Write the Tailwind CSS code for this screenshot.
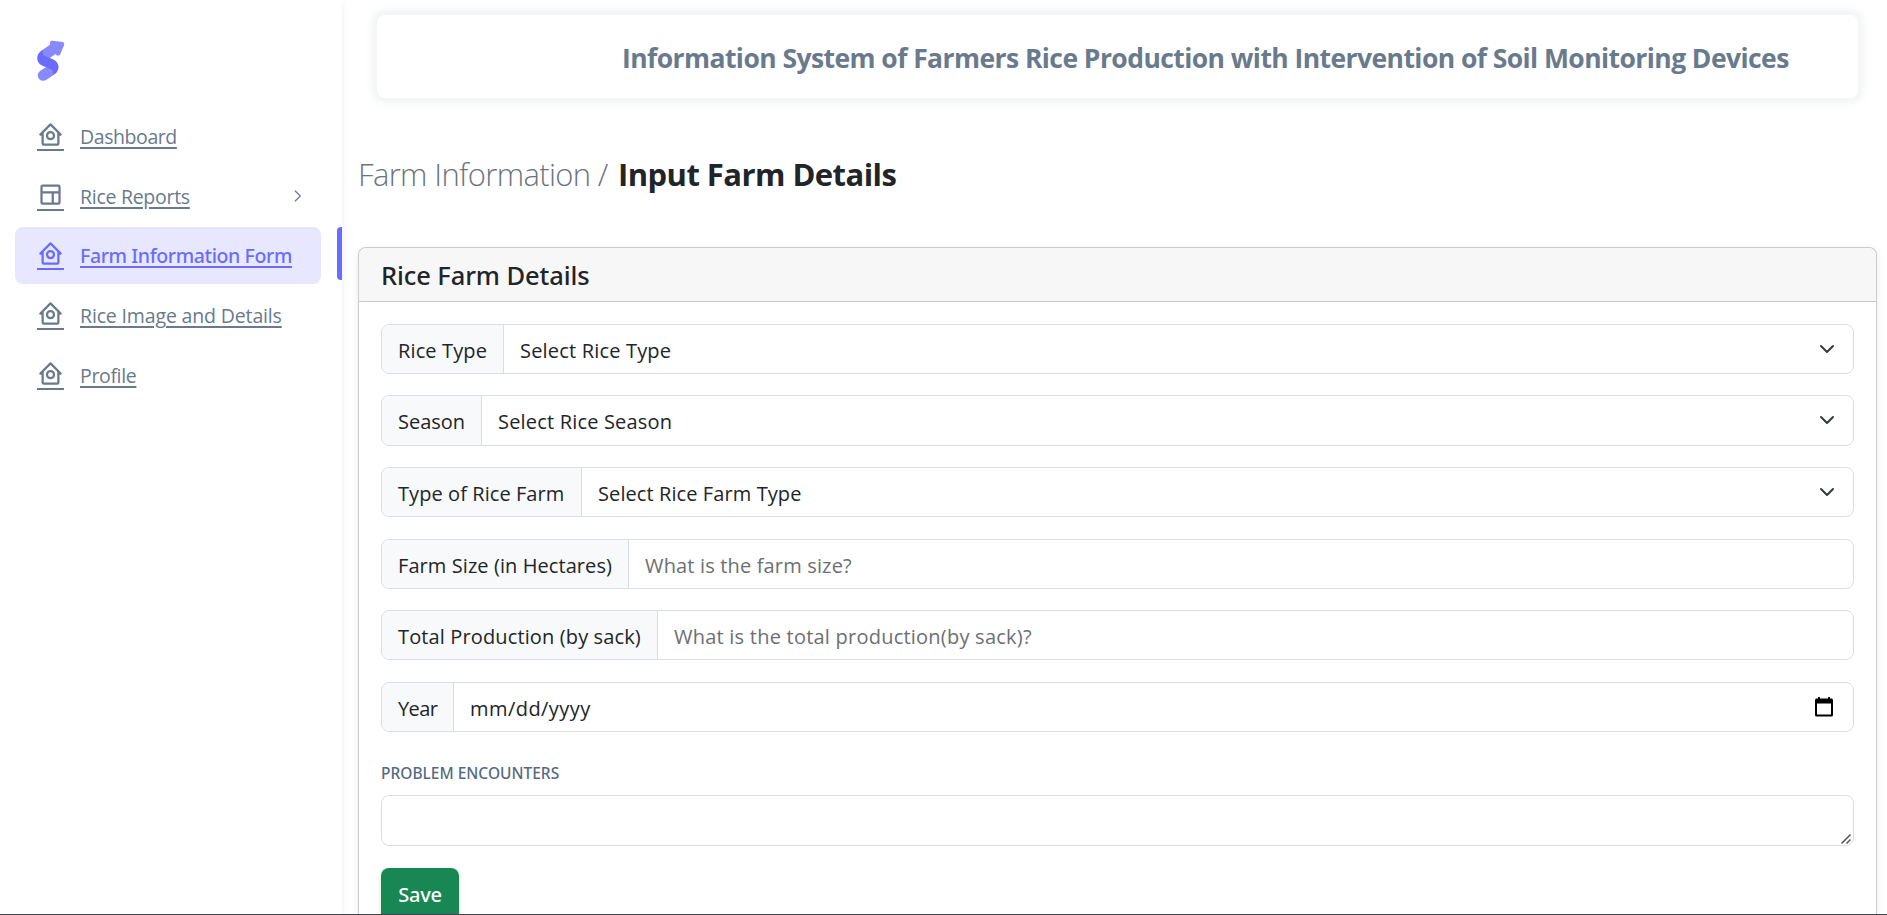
<!DOCTYPE html>
<html lang="en">
<head>
<meta charset="utf-8">
<title>Input Farm Details</title>
<script src="https://cdn.jsdelivr.net/npm/@tailwindcss/browser@4"></script>
</head>
<body class="relative flex h-[915px] overflow-hidden bg-white font-['Open_Sans',sans-serif] text-[#212529]">

<svg class="hidden">
  <symbol id="home" viewBox="0 0 24 24">
    <path fill="currentColor" d="M12.71 2.29a1 1 0 0 0-1.42 0l-9 9A1 1 0 0 0 3 13h1v7a2 2 0 0 0 2 2h12a2 2 0 0 0 2-2v-7h1a1 1 0 0 0 .71-1.71zM18 20H6v-9.59l6-6 6 6z"/>
    <circle cx="12" cy="13" r="3.1" fill="none" stroke="currentColor" stroke-width="2"/>
  </symbol>
  <symbol id="layout" viewBox="0 0 24 24">
    <path fill="none" stroke="currentColor" stroke-width="2" stroke-linejoin="round" d="M5 4h14a1 1 0 0 1 1 1v14a1 1 0 0 1-1 1H5a1 1 0 0 1-1-1V5a1 1 0 0 1 1-1zM4 10h16M14 10v10"/>
  </symbol>
</svg>

<!-- Sidebar -->
<aside class="z-10 flex h-full w-[342px] shrink-0 flex-col bg-white shadow-[0_2px_6px_0_rgba(67,89,113,0.12)]">
  <div class="h-[108px] shrink-0 pt-[33px] pl-[37px]">
    <svg class="h-[49px] w-[29.2px]" viewBox="0 0 25 42">
      <defs>
        <path id="s" d="M13.79.36 3.4 7.44C.57 9.69-.38 12.48.56 15.8c.13.43.54 1.99 2.56 3.43.69.49 2.2 1.15 4.53 1.99l-.05.03-4.97 3.3C.45 26.3.09 28.51 1.56 31.17c1.28 1.65 3.65 2.09 5.53 1.37 1.26-.48 4.37-2.54 9.33-6.17 1.61-1.87 2.28-3.92 1.99-6.13-.45-2.71-2.23-4.66-5.36-5.87l-2.13-.9 7.7-5.49z"/>
        <path id="s1" d="M5.47 6c-1.42 2.22-1.11 4.07.93 5.57 2.21 1 3.7 1.65 4.46 1.94l4.65.92 3.11-6.45C15.54 3.12 13.93.57 13.79.36 13.58.51 10.81 2.39 5.47 6z"/>
        <path id="s2" d="M7.5 21.23l4.82 2.09c1.85 1.44 2.08 3.17.69 5.19-1.39 2.01-2.7 3.28-3.93 3.79C5.78 33.43 4.13 34 4.13 34S2.75 33.05 0 31.16c-.56-3.34-.56-5.1 0-5.28.84-.27 2.78-3.06 3.3-3.35.35-.2 1.75-.63 4.2-1.3z"/>
        <path id="tri" d="M20.6 7.13l5 6.67A2 2 0 0 1 24 17H14a2 2 0 0 1-1.6-3.2l5-6.67a2 2 0 0 1 3.2 0z"/>
        <clipPath id="c"><use href="#s"/></clipPath>
      </defs>
      <g transform="translate(0 8)">
        <use href="#s" fill="#696cff"/>
        <g clip-path="url(#c)" fill="#fff" fill-opacity=".2"><use href="#s1"/><use href="#s2"/></g>
      </g>
      <g transform="translate(19 11) rotate(-300) translate(-19 -11)">
        <use href="#tri" fill="#696cff"/><use href="#tri" fill="#fff" fill-opacity=".2"/>
      </g>
    </svg>
  </div>

  <nav class="flex flex-col gap-[2.7px] text-[19.5px] text-[#697a8d]">
    <div class="ml-[15px] flex h-[57px] w-[306px] items-start pl-[22px]">
      <div class="mt-[13px] h-[30px] w-[27px] border-b-2 border-current"><svg class="h-[27px] w-[27px]"><use href="#home"/></svg></div>
      <span class="ml-4 pt-[15px] leading-7 tracking-[-0.42px] underline decoration-2 underline-offset-[3px]">Dashboard</span>
    </div>
    <div class="ml-[15px] flex h-[57px] w-[306px] items-start pl-[22px]">
      <div class="mt-[13px] h-[30px] w-[27px] border-b-2 border-current"><svg class="h-[27px] w-[27px]"><use href="#layout"/></svg></div>
      <span class="ml-4 pt-[15px] leading-7 tracking-[-0.28px] underline decoration-2 underline-offset-[3px]">Rice Reports</span>
      <svg class="mt-[22px] mr-[19px] ml-auto h-[12px] w-[8px]" viewBox="0 0 8 12"><path d="M1 .8 6.3 6 1 11.2" fill="none" stroke="currentColor" stroke-width="1.2"/></svg>
    </div>
    <div class="flex">
      <div class="ml-[15px] flex h-[57px] w-[306px] items-start rounded-lg bg-[#e7e7ff] pl-[22px] text-[#696cff]">
        <div class="mt-[13px] h-[30px] w-[27px] border-b-2 border-current"><svg class="h-[27px] w-[27px]"><use href="#home"/></svg></div>
        <span class="ml-4 pt-[15px] font-['Noto_Sans',sans-serif] leading-7 font-medium tracking-[-0.38px] underline decoration-2 underline-offset-[3px]">Farm Information Form</span>
      </div>
      <div class="ml-auto h-[53px] w-[5px] rounded-l-[4px] bg-[#696cff]"></div>
    </div>
    <div class="ml-[15px] flex h-[57px] w-[306px] items-start pl-[22px]">
      <div class="mt-[13px] h-[30px] w-[27px] border-b-2 border-current"><svg class="h-[27px] w-[27px]"><use href="#home"/></svg></div>
      <span class="ml-4 pt-[15px] leading-7 tracking-[-0.15px] underline decoration-2 underline-offset-[3px]">Rice Image and Details</span>
    </div>
    <div class="ml-[15px] flex h-[57px] w-[306px] items-start pl-[22px]">
      <div class="mt-[13px] h-[30px] w-[27px] border-b-2 border-current"><svg class="h-[27px] w-[27px]"><use href="#home"/></svg></div>
      <span class="ml-4 pt-[15px] leading-7 tracking-[-0.35px] underline decoration-2 underline-offset-[3px]">Profile</span>
    </div>
  </nav>
</aside>

<!-- Content -->
<main class="min-w-0 flex-1 pt-[15px] pr-[10px] pl-4">
  <header class="mr-[19px] ml-[19px] flex h-[83px] items-center rounded-lg bg-white pl-[245px] shadow-[0_0_7px_5px_rgba(161,172,184,0.15)]">
    <h1 class="pt-[3px] text-[26.5px] leading-9 font-bold tracking-[-0.57px] whitespace-nowrap text-[#697a8d]">Information System of Farmers Rice Production with Intervention of Soil Monitoring Devices</h1>
  </header>

  <h2 class="mt-[54px] flex h-11 items-center text-[31px] leading-[44px] whitespace-nowrap">
    <span class="w-[260px] font-light tracking-[-0.65px] text-[#6c757d]">Farm Information /</span>
    <span class="font-bold tracking-[-0.55px]">Input Farm Details</span>
  </h2>

  <section class="mt-[51px] h-[668px] overflow-hidden rounded-t-[8px] border border-b-0 border-[#cbcccf] bg-white shadow-[0_2px_7px_0_rgba(67,89,113,0.12)]">
    <div class="flex h-[54px] items-center rounded-t-[7px] border-b border-[#c8c9ca] bg-[#f7f7f7] pl-[22px]">
      <h3 class="font-['Noto_Sans',sans-serif] text-[25.5px] leading-9 font-medium tracking-[-0.1px]">Rice Farm Details</h3>
    </div>

    <form class="flex flex-col pt-[22px] pr-[22px] pl-[22px] text-[20px]">
      <div class="flex h-[50px] overflow-hidden rounded-[8px] border border-[#d9dee3]">
        <label class="flex w-[122px] items-center border-r border-[#d9dee3] bg-[#f8f9fa] pt-1 pl-4 tracking-[0.12px] whitespace-nowrap">Rice Type</label>
        <div class="flex flex-1 items-center justify-between pt-1 pr-[18px] pl-4 tracking-[0.18px]">Select Rice Type
          <svg class="mb-[4px] h-4 w-4" viewBox="0 0 16 16"><path fill="none" stroke="#343a40" stroke-linecap="round" stroke-linejoin="round" stroke-width="2" d="m2 5 6 6 6-6"/></svg></div>
      </div>
      <div class="mt-[21px] flex h-[51px] overflow-hidden rounded-[8px] border border-[#d9dee3]">
        <label class="flex w-[100px] items-center border-r border-[#d9dee3] bg-[#f8f9fa] pt-[3px] pl-4 whitespace-nowrap">Season</label>
        <div class="flex flex-1 items-center justify-between pt-[3px] pr-[18px] pl-4 tracking-[0.18px]">Select Rice Season
          <svg class="mb-[4px] h-4 w-4" viewBox="0 0 16 16"><path fill="none" stroke="#343a40" stroke-linecap="round" stroke-linejoin="round" stroke-width="2" d="m2 5 6 6 6-6"/></svg></div>
      </div>
      <div class="mt-[21px] flex h-[50px] overflow-hidden rounded-[8px] border border-[#d9dee3]">
        <label class="flex w-[200px] items-center border-r border-[#d9dee3] bg-[#f8f9fa] pt-1 pl-4 tracking-[0.07px] whitespace-nowrap">Type of Rice Farm</label>
        <div class="flex flex-1 items-center justify-between pt-1 pr-[18px] pl-4 tracking-[0.09px]">Select Rice Farm Type
          <svg class="mb-[4px] h-4 w-4" viewBox="0 0 16 16"><path fill="none" stroke="#343a40" stroke-linecap="round" stroke-linejoin="round" stroke-width="2" d="m2 5 6 6 6-6"/></svg></div>
      </div>
      <div class="mt-[22px] flex h-[50px] overflow-hidden rounded-[8px] border border-[#d9dee3]">
        <label class="flex w-[247px] items-center border-r border-[#d9dee3] bg-[#f8f9fa] pt-1 pl-4 tracking-[0.08px] whitespace-nowrap">Farm Size (in Hectares)</label>
        <div class="flex flex-1 items-center pt-1 pl-4 tracking-[0.16px] text-[#6c6f73]">What is the farm size?</div>
      </div>
      <div class="mt-[21px] flex h-[50px] overflow-hidden rounded-[8px] border border-[#d9dee3]">
        <label class="flex w-[276px] items-center border-r border-[#d9dee3] bg-[#f8f9fa] pt-1 pl-4 tracking-[0.13px] whitespace-nowrap">Total Production (by sack)</label>
        <div class="flex flex-1 items-center pt-1 pl-4 tracking-[0.23px] text-[#6c6f73]">What is the total production(by sack)?</div>
      </div>
      <div class="mt-[22px] flex h-[50px] overflow-hidden rounded-[8px] border border-[#d9dee3]">
        <label class="flex w-[72px] items-center border-r border-[#d9dee3] bg-[#f8f9fa] pt-1 pl-4 tracking-[-0.6px] whitespace-nowrap">Year</label>
        <div class="flex flex-1 items-center justify-between pt-1 pr-[20px] pl-4 tracking-[0.45px]">mm/dd/yyyy
          <svg class="mb-[5px] h-5 w-[18px]" viewBox="0 0 18 20"><path fill="#000" fill-rule="evenodd" d="M3 0h2v1.5h8V0h2v1.5h1.5A1.5 1.5 0 0 1 18 3v15a1.500 1.500 0 0 1-1.500 1.500h-15A1.500 1.500 0 0 1 0 18V3a1.500 1.500 0 0 1 1.500-1.500H3zM2 6.500v11h14v-11z"/></svg></div>
      </div>

      <label class="mt-[31px] h-[22px] font-['Noto_Sans',sans-serif] text-[15.5px] leading-[21px] font-medium text-[#566a7f]">PROBLEM ENCOUNTERS</label>
      <div class="mt-[10px] flex h-[51px] items-end justify-end rounded-[8px] border border-[#d9dee3]">
        <svg class="mr-[2px] mb-[1px] h-[10px] w-[10px]" viewBox="0 0 10 10"><path d="M.5 9.500 9.500.500M5.500 9.500 9.500 5.500" fill="none" stroke="#555" stroke-width="1.500"/></svg>
      </div>
      <button type="button" class="mt-[22px] h-[47px] w-[78px] rounded-t-[8px] bg-[#198754] font-['Noto_Sans',sans-serif] text-[20px] leading-[28px] font-medium tracking-[-0.2px] text-white shadow-[0_2px_5px_0_rgba(113,221,55,0.35)]"><span class="block pt-[7px]">Save</span></button>
    </form>
  </section>
</main>

<div class="absolute bottom-0 left-0 z-20 h-px w-full bg-[#43444f]"></div>
</body>
</html>
